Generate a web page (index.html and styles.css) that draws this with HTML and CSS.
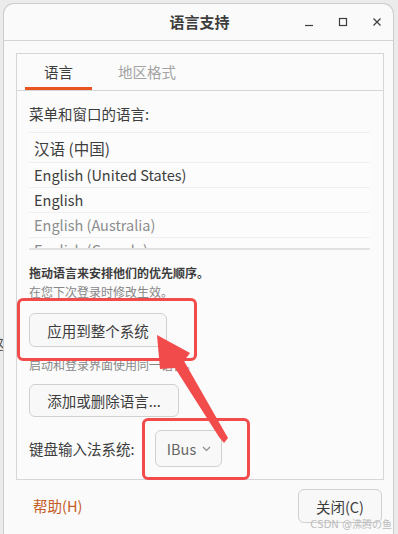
FILE: index.html
```html
<!DOCTYPE html>
<html lang="zh-CN">
<head>
    <meta charset="UTF-8">
    <meta name="viewport" content="width=device-width, initial-scale=1">
    <title>语言支持</title>
    <link rel="stylesheet" href="styles.css">
</head>
<body>
  <span class="behindText">这</span>

  <div class="window">
    <div class="titlebar">
      <span class="title">语言支持</span>
      <div class="controls">
        <svg width="10" height="10" viewBox="0 0 10 10"><path d="M1 8.5h8" stroke="#3d3d3d" stroke-width="1.2"/></svg>
        <svg width="10" height="10" viewBox="0 0 10 10"><rect x="1.5" y="1.5" width="7" height="7" fill="none" stroke="#3d3d3d" stroke-width="1.2"/></svg>
        <svg width="10" height="10" viewBox="0 0 10 10"><path d="M1.5 1.5l7 7M8.5 1.5l-7 7" stroke="#3d3d3d" stroke-width="1.2"/></svg>
      </div>
    </div>

    <div class="content">
      <div class="notebook">
        <div class="tabs">
          <div class="tab active">语言</div>
          <div class="tab">地区格式</div>
        </div>

        <div class="page">
          <div class="label">菜单和窗口的语言:</div>
          <div class="langList">
            <div class="langRow first">汉语 (中国)</div>
            <div class="langRow">English (United States)</div>
            <div class="langRow">English</div>
            <div class="langRow dim">English (Australia)</div>
            <div class="langRow dim">English (Canada)</div>
          </div>

          <div class="hintBold">拖动语言来安排他们的优先顺序。</div>
          <div class="hint">在您下次登录时修改生效。</div>

          <button class="btn applyBtn">应用到整个系统</button>
          <div class="hint afterApply">启动和登录界面使用同一语言。</div>

          <button class="btn addBtn">添加或删除语言...</button>

          <div class="imRow">
            <span class="label">键盘输入法系统:</span>
            <button class="btn combo">IBus
              <svg width="9" height="6" viewBox="0 0 9 6"><path d="M1 1l3.5 3.5L8 1" fill="none" stroke="#8a8a8a" stroke-width="1.2"/></svg>
            </button>
          </div>
        </div>
      </div>

      <div class="actions">
        <span class="helpLink">帮助(H)</span>
        <button class="btn closeBtn">关闭(C)</button>
      </div>
    </div>
  </div>

  <!-- annotation drawn over the screenshot -->
  <div class="markBox markApply"></div>
  <div class="markBox markCombo"></div>
  <svg class="arrow" width="398" height="534" viewBox="0 0 398 534">
    <polygon points="157,335 190,353 184,361 228,438 224,443 219,437 175,368 160,369" fill="#f24b4b"/>
  </svg>

  <div class="watermark">CSDN @沸腾の鱼</div>
</body>
</html>
```

FILE: styles.css
```css
* {
    box-sizing: border-box;
}

body {
    margin: 0;
    width: 398px;
    height: 534px;
    overflow: hidden;
    position: relative;
    background: #ebebeb;
    font-family: "Noto Sans CJK SC", "Noto Sans", sans-serif;
    color: #3d3d3d;
}

.behindText {
    position: absolute;
    left: -9px;
    top: 333px;
    font-size: 14px;
    color: #555;
}

.window {
    position: relative;
    margin: 3px 4px 0 3px;
    height: 531px;
    border: 1px solid #cdcdcd;
    border-bottom: none;
    border-radius: 11px 11px 0 0;
    background: #fafafa;
    display: flex;
    flex-direction: column;
}

.titlebar {
    height: 37px;
    border-bottom: 1px solid #d4d4d4;
    display: flex;
    align-items: center;
    justify-content: center;
    position: relative;
}

.title {
    font-size: 15px;
    font-weight: bold;
    margin-left: 2px;
    margin-top: -1px;
}

.controls {
    position: absolute;
    right: 11px;
    top: 13px;
    display: flex;
    gap: 24px;
}

.content {
    flex: 1;
    padding: 12px 9px 0 12px;
    display: flex;
    flex-direction: column;
}

.notebook {
    border: 1px solid #d6d6d6;
    background: #fbfbfb;
}

.tabs {
    height: 37px;
    border-bottom: 1px solid #d6d6d6;
    display: flex;
    padding-left: 8px;
    gap: 7px;
}

.tab {
    padding: 0 19px;
    font-size: 14.5px;
    color: #a3a3a3;
    display: flex;
    align-items: center;
    border-bottom: 3px solid transparent;
    padding-top: 1px;
}

.tab.active {
    color: #3d3d3d;
    border-bottom-color: #e95420;
}

.page {
    padding: 13px 13px 12px 12px;
    display: flex;
    flex-direction: column;
    align-items: flex-start;
}

.label {
    font-size: 14.5px;
    line-height: 20px;
}

.langList {
    margin-top: 8px;
    width: 100%;
    height: 118px;
    overflow: hidden;
    border-top: 1px solid #efefef;
    border-bottom: 2px solid #e2e2e2;
    background: #fcfcfc;
}

.langRow {
    height: 25px;
    line-height: 24px;
    padding-left: 5px;
    font-size: 14.5px;
    border-bottom: 1px solid #f0f0f0;
}

.langRow.first {
    height: 30px;
    line-height: 30px;
    font-size: 15.5px;
}

.langRow.dim {
    color: #8c8c8c;
}

.hintBold {
    margin-top: 13px;
    font-size: 12px;
    font-weight: bold;
    line-height: 19px;
}

.hint {
    font-size: 12px;
    line-height: 19px;
    color: #878787;
}

.btn {
    font-family: inherit;
    color: #3d3d3d;
    background: #f8f8f8;
    border: 1px solid #d0d0d0;
    border-radius: 6px;
    font-size: 14.5px;
}

.applyBtn {
    margin-top: 12px;
    width: 138px;
    height: 34px;
}

.afterApply {
    margin-top: 8px;
}

.addBtn {
    margin-top: 10px;
    width: 150px;
    height: 33px;
}

.imRow {
    margin-top: 13px;
    display: flex;
    align-items: center;
    gap: 20px;
}

.combo {
    width: 67px;
    height: 37px;
    display: flex;
    align-items: center;
    justify-content: center;
    gap: 6px;
    color: #666;
    padding-right: 4px;
}

.actions {
    flex: 1;
    display: flex;
    align-items: center;
    justify-content: space-between;
    padding: 0 2px 4px 17px;
}

.helpLink {
    font-size: 14.5px;
    color: #c65a22;
}

.closeBtn {
    width: 84px;
    height: 34px;
    margin-top: 2px;
}

.markBox {
    position: absolute;
    border: 3px solid #f24b4b;
    border-radius: 6px;
}

.markApply {
    left: 17px;
    top: 298px;
    width: 180px;
    height: 63px;
}

.markCombo {
    left: 142px;
    top: 418px;
    width: 108px;
    height: 62px;
}

.arrow {
    position: absolute;
    left: 0;
    top: 0;
}

.watermark {
    position: absolute;
    right: 6px;
    bottom: 3px;
    font-size: 10px;
    color: #bdbdbd;
    font-family: "DejaVu Sans", "Noto Sans CJK SC", sans-serif;
}
```
